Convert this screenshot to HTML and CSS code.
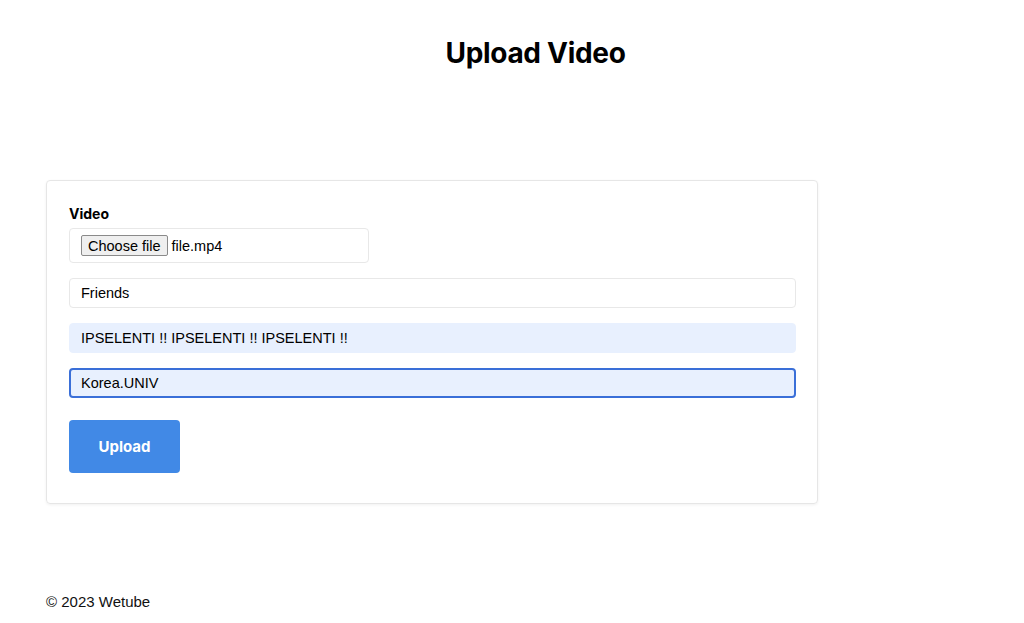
FILE: index.html
```html
<!DOCTYPE html>
<html lang="en">
<head>
  <meta charset="UTF-8" />
  <title>Upload Video | Wetube</title>
  <meta name="viewport" content="width=device-width, initial-scale=1" />
  <link rel="stylesheet" href="styles.css">
</head>
<body>
  <header class="page-header">
    <h1>Upload Video</h1>
  </header>

  <main class="page-main">
    <form class="upload-form" onsubmit="return false;">
      <label class="form-label" for="video">Video</label>
      <div class="file-box">
        <button type="button" class="file-btn">Choose file</button>
        <span class="file-name">file.mp4</span>
      </div>
      <input class="text-input" type="text" name="title" value="Friends" />
      <input class="text-input autofill" type="text" name="description" value="IPSELENTI !! IPSELENTI !! IPSELENTI !!" />
      <input class="text-input autofill focused" type="text" name="hashtags" value="Korea.UNIV" />
      <button type="submit" class="submit-btn">Upload</button>
    </form>
  </main>

  <footer class="page-footer">&copy; 2023 Wetube</footer>
</body>
</html>
```

FILE: styles.css
```css
* {
  box-sizing: border-box;
}
body {
  margin: 0;
  padding: 0 0 0 46px;
  font-family: 'Liberation Sans', Arial, sans-serif;
  color: #111;
  background: #fff;
  min-height: 623px;
  display: flex;
  flex-direction: column;
}
.page-header {
  text-align: center;
  padding-top: 36px;
  padding-left: 1px;
}
.page-header h1 {
  margin: 0;
  font-family: 'Inter', 'Liberation Sans', sans-serif;
  font-size: 28px;
  font-weight: 700;
  letter-spacing: -0.3px;
  color: #000;
}
.page-main {
  padding-top: 110px;
}
.upload-form {
  width: 772px;
  border: 1px solid #e6e6e6;
  border-radius: 4px;
  box-shadow: 0 1px 3px rgba(0,0,0,0.06);
  padding: 24px 21px 30px 22px;
  display: flex;
  flex-direction: column;
  align-items: flex-start;
}
.form-label {
  font-family: 'Inter', 'Liberation Sans', sans-serif;
  font-weight: 700;
  font-size: 14px;
  color: #000;
  margin-bottom: 6px;
}
.file-box {
  width: 300px;
  height: 35px;
  border: 1px solid #e8e8e8;
  border-radius: 4px;
  display: flex;
  align-items: center;
  padding: 0 11px;
  gap: 4px;
  font-size: 14.5px;
}
.file-btn {
  font-family: 'Liberation Sans', Arial, sans-serif;
  font-size: 14.5px;
  color: #000;
  background: #efefef;
  border: 1px solid #8a8a8a;
  border-radius: 2px;
  padding: 1px 6px;
  height: 21px;
  line-height: 16px;
}
.file-name {
  color: #000;
}
.text-input {
  width: 100%;
  height: 30px;
  margin-top: 15px;
  border: 1px solid #e8e8e8;
  border-radius: 4px;
  padding: 0 11px;
  font-family: 'Liberation Sans', Arial, sans-serif;
  font-size: 14.5px;
  color: #000;
  background: #fff;
  outline: none;
}
.text-input.autofill {
  background: #e8f0fe;
  border-color: #e8f0fe;
}
.text-input.focused {
  border: 2px solid #3a6fd8;
  padding: 0 10px;
}
.submit-btn {
  margin-top: 22px;
  width: 111px;
  height: 53px;
  border: none;
  border-radius: 4px;
  background: #4189e6;
  color: #fff;
  font-family: 'Inter', 'Liberation Sans', sans-serif;
  font-weight: 700;
  font-size: 15px;
  cursor: pointer;
}
.page-footer {
  margin-top: auto;
  padding-bottom: 13px;
  font-size: 15px;
  color: #111;
}
```
